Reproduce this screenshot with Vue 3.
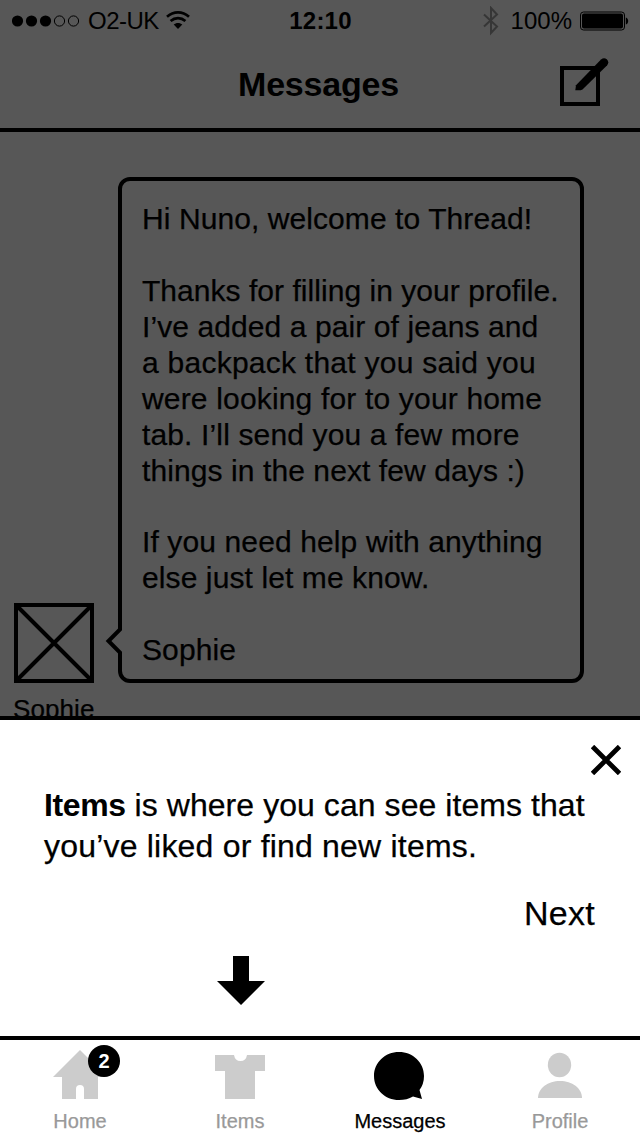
<script setup>
const paragraphs = [
  [{ text: 'Hi Nuno, welcome to Thread!', tracking: 0.08 }],
  [
    { text: 'Thanks for filling in your profile.', tracking: 0.04 },
    { text: 'I’ve added a pair of jeans and', tracking: 0.09 },
    { text: 'a backpack that you said you', tracking: 0.25 },
    { text: 'were looking for to your home', tracking: 0.17 },
    { text: 'tab. I’ll send you a few more', tracking: 0.14 },
    { text: 'things in the next few days :)', tracking: 0.09 }
  ],
  [
    { text: 'If you need help with anything', tracking: 0.12 },
    { text: 'else just let me know.', tracking: 0.1 }
  ],
  [{ text: 'Sophie', tracking: 0.1 }]
]
</script>

<template>
  <div class="screen">
    <div class="status">
      <div class="status-left">
        <svg class="signal" width="68" height="12" viewBox="0 0 68 12">
          <circle cx="5.5" cy="6" r="5.6" />
          <circle cx="19.5" cy="6" r="5.6" />
          <circle cx="33.5" cy="6" r="5.6" />
          <circle class="ring" cx="47.5" cy="6" r="5.1" />
          <circle class="ring" cx="61.5" cy="6" r="5.1" />
        </svg>
        <span class="carrier">O2-UK</span>
        <svg class="wifi" width="24" height="18" viewBox="0 0 24 18">
          <path class="arc" d="M1 5.700C7.500 -.1 16.500 -.1 23 5.700" />
          <path class="arc" d="M4.600 10C9 6.100 15 6.100 19.400 10" />
          <path d="M7.700 13.600C10 11.400 14 11.400 16.300 13.600L12 18Z" />
        </svg>
      </div>
      <div class="clock">12:10</div>
      <div class="status-right">
        <svg class="bluetooth" width="16" height="30" viewBox="0 0 16 30">
          <path d="M1 8.500L14 20.500L8 27V2L14 8.500L1 20.500" />
        </svg>
        <span class="percent">100%</span>
        <svg class="battery" width="50" height="20" viewBox="0 0 50 20">
          <rect class="case" x="1.500" y="1" width="44" height="18" rx="3" />
          <rect x="3" y="2.500" width="41" height="15" rx="2" />
          <path d="M46.800 6.500C50 7.500 50 12.500 46.800 13.500Z" />
        </svg>
      </div>
    </div>

    <header class="header">
      <h1>Messages</h1>
      <svg class="compose" width="50" height="50" viewBox="0 0 50 50">
        <rect class="sheet" x="2" y="10" width="36" height="36" />
        <path d="M15.300 32.300L16 27.200L41 1.500Q44 -1 46.800 1.300Q49.500 4 47.200 7.200L22.500 31.500Q21 32.600 15.300 32.300Z" />
      </svg>
    </header>

    <main class="thread">
      <div class="sender">
        <svg class="avatar" width="80" height="80" viewBox="0 0 80 80">
          <rect x="2" y="2" width="76" height="76" />
          <path d="M3 3L77 77M77 3L3 77" />
        </svg>
        <div class="name">Sophie</div>
      </div>
      <div class="bubble">
        <p v-for="(lines, i) in paragraphs" :key="i">
          <span v-for="line in lines" :key="line.text" :style="{ letterSpacing: line.tracking + 'px' }">{{ line.text }}</span>
        </p>
        <svg class="tail" width="18" height="32" viewBox="0 0 18 32">
          <path class="gap" d="M13 4H18V28H13Z" />
          <path class="edge" d="M15 0V4.500L3.500 16L15 27.500V32" />
        </svg>
      </div>
    </main>

    <section class="panel">
      <svg class="close" width="30" height="30" viewBox="0 0 30 30">
        <path d="M1.500 1.500L28.500 28.500M28.500 1.500L1.500 28.500" />
      </svg>
      <p>
        <span class="first"><b>Items</b> is where you can see items that</span>
        <span class="second">you’ve liked or find new items.</span>
      </p>
      <div class="next">Next</div>
      <svg class="arrow" width="48" height="49" viewBox="0 0 48 49">
        <path d="M16 0H32V25H48L24 49L0 25H16Z" />
      </svg>
    </section>

    <nav class="tabs">
      <div class="tab">
        <svg width="80" height="60" viewBox="0 0 80 60">
          <path d="M40 10L67 37H58V59H44V49Q44 45 40 45Q36 45 36 49V59H22V37H13Z" />
        </svg>
        <span>Home</span>
        <i class="badge">2</i>
      </div>
      <div class="tab">
        <svg width="80" height="60" viewBox="0 0 80 60">
          <path d="M15 15H34Q35 21 40.500 21Q46 21 47 15H65V31H55V59H25V31H15Z" />
        </svg>
        <span>Items</span>
      </div>
      <div class="tab active">
        <svg width="80" height="60" viewBox="0 0 80 60">
          <path d="M39 12C53 12 64 22.500 64 36Q64 44 59.500 50L62 59L53 56.500Q47 60 39 60C25 60 14 49.500 14 36S25 12 39 12Z" />
        </svg>
        <span>Messages</span>
      </div>
      <div class="tab">
        <svg width="80" height="60" viewBox="0 0 80 60">
          <ellipse cx="39.500" cy="25" rx="11.700" ry="12.200" />
          <path d="M18 58C18 48 28 41 40 41S62 48 62 58Z" />
        </svg>
        <span>Profile</span>
      </div>
    </nav>
  </div>
</template>

<style>
body {
  margin: 0;
}
</style>

<style scoped>
.screen {
  width: 640px;
  height: 1136px;
  display: flex;
  flex-direction: column;
  overflow: hidden;
  background: #575757;
  color: #000;
  font-family: "Liberation Sans", Arial, sans-serif;
}
svg {
  display: block;
  flex: none;
}
.status {
  height: 40px;
  box-sizing: border-box;
  padding: 0 11px 0 12px;
  display: grid;
  grid-template-columns: 1fr 66px 1fr;
  font-size: 24px;
  line-height: 41px;
  white-space: nowrap;
}
.status-left,
.status-right {
  display: flex;
  align-items: center;
}
.status-right {
  justify-content: flex-end;
}
.ring {
  fill: none;
  stroke: #000;
}
.carrier {
  margin: 0 7px 0 8px;
  letter-spacing: -0.5px;
}
.wifi {
  margin-top: -1px;
}
.arc {
  fill: none;
  stroke: #000;
  stroke-width: 2.7;
}
.clock {
  font-weight: bold;
  text-align: center;
  letter-spacing: 0.2px;
}
.bluetooth {
  margin-right: 12px;
  fill: none;
  stroke: #363636;
  stroke-width: 2;
}
.percent {
  margin-right: 7px;
}
.case {
  fill: none;
  stroke: #000;
}
.header {
  height: 88px;
  border-bottom: 4px solid #000;
  display: grid;
  grid-template-columns: 80px 1fr 80px;
}
h1 {
  grid-column: 2;
  margin: 0;
  padding-right: 3px;
  text-align: center;
  font-size: 34px;
  line-height: 88px;
  letter-spacing: -0.2px;
}
.compose {
  margin-top: 18px;
}
.sheet {
  fill: none;
  stroke: #000;
  stroke-width: 4;
}
.thread {
  height: 584px;
  box-sizing: border-box;
  padding: 45px 0 0 14px;
  display: flex;
  gap: 24px;
  overflow: hidden;
}
.sender {
  width: 80px;
  margin-top: 426px;
}
.avatar {
  fill: none;
  stroke: #000;
  stroke-width: 4;
}
.name {
  margin-left: -1px;
  font-size: 26px;
  line-height: 30px;
  margin-top: 11px;
  letter-spacing: 0.1px;
  -webkit-text-stroke: 0.25px #000;
}
.bubble {
  position: relative;
  width: 466px;
  height: 506px;
  box-sizing: border-box;
  border: 4px solid #000;
  border-radius: 12px;
  padding: 20px 0 0 20px;
  font-size: 30px;
  line-height: 36px;
  white-space: nowrap;
  -webkit-text-stroke: 0.25px #000;
}
.bubble p {
  margin: 0 0 36px;
}
.bubble p:nth-child(2) {
  margin-bottom: 35px;
}
.bubble span {
  display: block;
}
.tail {
  position: absolute;
  left: -17px;
  top: 444px;
}
.gap {
  fill: #575757;
}
.edge {
  fill: none;
  stroke: #000;
  stroke-width: 4;
}
.panel {
  height: 320px;
  box-sizing: border-box;
  border-top: 4px solid #000;
  background: #fff;
  display: flex;
  flex-direction: column;
}
.close {
  align-self: flex-end;
  margin: 25px 19px 0 0;
  fill: none;
  stroke: #000;
  stroke-width: 4.8;
}
.panel p {
  margin: 10px 0 0 44px;
  font-size: 32px;
  line-height: 41px;
  white-space: nowrap;
  -webkit-text-stroke: 0.25px #000;
}
.panel p span {
  display: block;
}
.first {
  letter-spacing: 0.06px;
}
.first b {
  letter-spacing: -0.4px;
  -webkit-text-stroke: 0;
}
.second {
  letter-spacing: 0.2px;
}
.next {
  align-self: flex-end;
  margin: 26px 45px 0 0;
  font-size: 34px;
  line-height: 40px;
  letter-spacing: 0.3px;
  -webkit-text-stroke: 0.25px #000;
}
.arrow {
  margin: 23px 0 0 217px;
}
.tabs {
  height: 100px;
  box-sizing: border-box;
  border-top: 4px solid #000;
  background: #fff;
  display: grid;
  grid-template-columns: repeat(4, 160px);
}
.tab {
  position: relative;
  display: flex;
  flex-direction: column;
  align-items: center;
  color: #999;
  fill: #ccc;
  font-size: 20px;
  line-height: 22px;
}
.tab span {
  margin-top: 10px;
  -webkit-text-stroke: 0.25px currentColor;
}
.active {
  color: #000;
  fill: #000;
}
.badge {
  position: absolute;
  left: 88px;
  top: 5px;
  width: 32px;
  height: 32px;
  border-radius: 50%;
  background: #000;
  color: #fff;
  font-style: normal;
  font-weight: bold;
  line-height: 33px;
  text-align: center;
}
</style>
